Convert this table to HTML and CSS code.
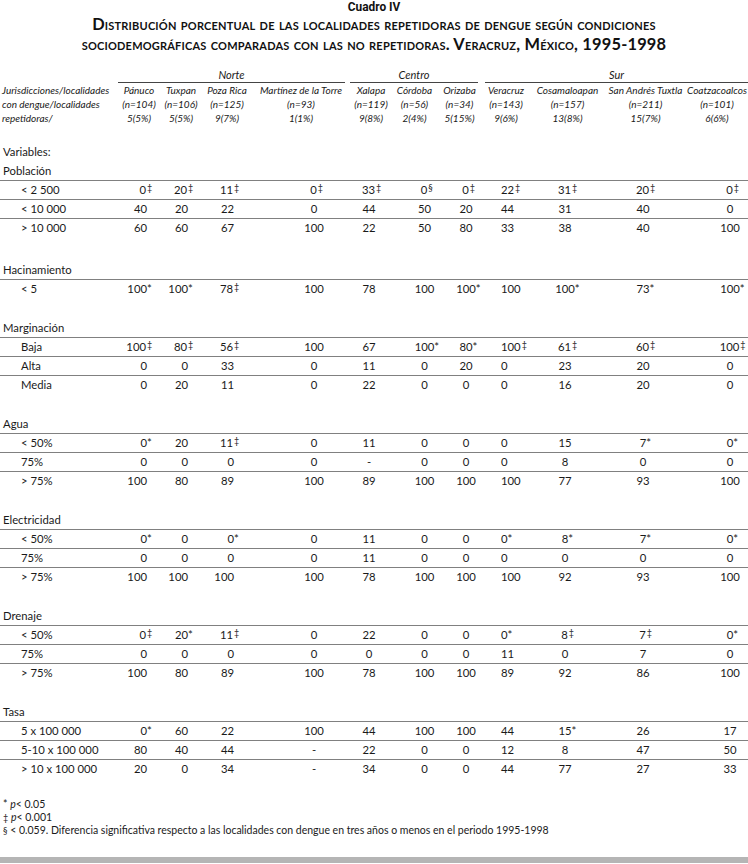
FILE: index.html
```html
<!DOCTYPE html>
<html lang="es">
<head>
<meta charset="utf-8">
<title>Cuadro IV</title>
<link rel="stylesheet" href="styles.css">
</head>
<body>
<div class="page">
  <div class="cuadro">Cuadro IV</div>
  <h1 class="title">Distribución porcentual de las localidades repetidoras de dengue según condiciones<br>sociodemográficas comparadas con las no repetidoras. Veracruz, México, 1995-1998</h1>

  <div class="groups">
    <div class="g norte">Norte</div>
    <div class="g centro">Centro</div>
    <div class="g sur">Sur</div>
  </div>
  <div class="heads">
    <div class="hlabel">Jurisdicciones/localidades<br>con dengue/localidades<br>repetidoras/</div>
    <div>Pánuco<br>(n=104)<br>5(5%)</div>
    <div>Tuxpan<br>(n=106)<br>5(5%)</div>
    <div>Poza Rica<br>(n=125)<br>9(7%)</div>
    <div>Martínez de la Torre<br>(n=93)<br>1(1%)</div>
    <div>Xalapa<br>(n=119)<br>9(8%)</div>
    <div>Córdoba<br>(n=56)<br>2(4%)</div>
    <div>Orizaba<br>(n=34)<br>5(15%)</div>
    <div>Veracruz<br>(n=143)<br>9(6%)</div>
    <div>Cosamaloapan<br>(n=157)<br>13(8%)</div>
    <div>San Andrés Tuxtla<br>(n=211)<br>15(7%)</div>
    <div>Coatzacoalcos<br>(n=101)<br>6(6%)</div>
  </div>

  <div class="variables">Variables:</div>

  <section class="sec first">
    <div class="stitle">Población</div>
    <div class="row"><div>&lt; 2 500</div><div>0<span class="m">‡</span></div><div>20<span class="m">‡</span></div><div>11<span class="m">‡</span></div><div>0<span class="m">‡</span></div><div>33<span class="m">‡</span></div><div>0<span class="m">§</span></div><div>0<span class="m">‡</span></div><div>22<span class="m">‡</span></div><div>31<span class="m">‡</span></div><div>20<span class="m">‡</span></div><div>0<span class="m">‡</span></div></div>
    <div class="row"><div>&lt; 10 000</div><div>40</div><div>20</div><div>22</div><div>0</div><div>44</div><div>50</div><div>20</div><div>44</div><div>31</div><div>40</div><div>0</div></div>
    <div class="row"><div>&gt; 10 000</div><div>60</div><div>60</div><div>67</div><div>100</div><div>22</div><div>50</div><div>80</div><div>33</div><div>38</div><div>40</div><div>100</div></div>
  </section>

  <section class="sec">
    <div class="stitle">Hacinamiento</div>
    <div class="row"><div>&lt; 5</div><div>100<span class="a">*</span></div><div>100<span class="a">*</span></div><div>78<span class="m">‡</span></div><div>100</div><div>78</div><div>100</div><div>100<span class="a">*</span></div><div>100</div><div>100<span class="a">*</span></div><div>73<span class="a">*</span></div><div>100<span class="a">*</span></div></div>
  </section>

  <section class="sec">
    <div class="stitle">Marginación</div>
    <div class="row"><div>Baja</div><div>100<span class="m">‡</span></div><div>80<span class="m">‡</span></div><div>56<span class="m">‡</span></div><div>100</div><div>67</div><div>100<span class="a">*</span></div><div>80<span class="a">*</span></div><div>100<span class="m">‡</span></div><div>61<span class="m">‡</span></div><div>60<span class="m">‡</span></div><div>100<span class="m">‡</span></div></div>
    <div class="row"><div>Alta</div><div>0</div><div>0</div><div>33</div><div>0</div><div>11</div><div>0</div><div>20</div><div>0</div><div>23</div><div>20</div><div>0</div></div>
    <div class="row"><div>Media</div><div>0</div><div>20</div><div>11</div><div>0</div><div>22</div><div>0</div><div>0</div><div>0</div><div>16</div><div>20</div><div>0</div></div>
  </section>

  <section class="sec">
    <div class="stitle">Agua</div>
    <div class="row"><div>&lt; 50%</div><div>0<span class="a">*</span></div><div>20</div><div>11<span class="m">‡</span></div><div>0</div><div>11</div><div>0</div><div>0</div><div>0</div><div>15</div><div>7<span class="a">*</span></div><div>0<span class="a">*</span></div></div>
    <div class="row"><div>75%</div><div>0</div><div>0</div><div>0</div><div>0</div><div>-</div><div>0</div><div>0</div><div>0</div><div>8</div><div>0</div><div>0</div></div>
    <div class="row"><div>&gt; 75%</div><div>100</div><div>80</div><div>89</div><div>100</div><div>89</div><div>100</div><div>100</div><div>100</div><div>77</div><div>93</div><div>100</div></div>
  </section>

  <section class="sec">
    <div class="stitle">Electricidad</div>
    <div class="row"><div>&lt; 50%</div><div>0<span class="a">*</span></div><div>0</div><div>0<span class="a">*</span></div><div>0</div><div>11</div><div>0</div><div>0</div><div>0<span class="a">*</span></div><div>8<span class="a">*</span></div><div>7<span class="a">*</span></div><div>0<span class="a">*</span></div></div>
    <div class="row"><div>75%</div><div>0</div><div>0</div><div>0</div><div>0</div><div>11</div><div>0</div><div>0</div><div>0</div><div>0</div><div>0</div><div>0</div></div>
    <div class="row"><div>&gt; 75%</div><div>100</div><div>100</div><div>100</div><div>100</div><div>78</div><div>100</div><div>100</div><div>100</div><div>92</div><div>93</div><div>100</div></div>
  </section>

  <section class="sec">
    <div class="stitle">Drenaje</div>
    <div class="row"><div>&lt; 50%</div><div>0<span class="m">‡</span></div><div>20<span class="a">*</span></div><div>11<span class="m">‡</span></div><div>0</div><div>22</div><div>0</div><div>0</div><div>0<span class="a">*</span></div><div>8<span class="m">‡</span></div><div>7<span class="m">‡</span></div><div>0<span class="a">*</span></div></div>
    <div class="row"><div>75%</div><div>0</div><div>0</div><div>0</div><div>0</div><div>0</div><div>0</div><div>0</div><div>11</div><div>0</div><div>7</div><div>0</div></div>
    <div class="row"><div>&gt; 75%</div><div>100</div><div>80</div><div>89</div><div>100</div><div>78</div><div>100</div><div>100</div><div>89</div><div>92</div><div>86</div><div>100</div></div>
  </section>

  <section class="sec">
    <div class="stitle">Tasa</div>
    <div class="row"><div>5 x 100 000</div><div>0<span class="a">*</span></div><div>60</div><div>22</div><div>100</div><div>44</div><div>100</div><div>100</div><div>44</div><div>15<span class="a">*</span></div><div>26</div><div>17</div></div>
    <div class="row"><div>5-10 x 100 000</div><div>80</div><div>40</div><div>44</div><div>-</div><div>22</div><div>0</div><div>0</div><div>12</div><div>8</div><div>47</div><div>50</div></div>
    <div class="row"><div>&gt; 10 x 100 000</div><div>20</div><div>0</div><div>34</div><div>-</div><div>34</div><div>0</div><div>0</div><div>44</div><div>77</div><div>27</div><div>33</div></div>
  </section>

  <div class="notes">
    <p><span class="na">*</span> <i>p</i>&lt; 0.05</p>
    <p><span class="nm">‡</span> <i>p</i>&lt; 0.001</p>
    <p><span class="nm">§</span> &lt; 0.059. Diferencia significativa respecto a las localidades con dengue en tres años o menos en el periodo 1995-1998</p>
  </div>

  <div class="bar"></div>
</div>
</body>
</html>
```

FILE: styles.css
```css
* { box-sizing: border-box; }

html, body {
  margin: 0;
  padding: 0;
  background: #ffffff;
}

body {
  font-family: "Lato", "Open Sans", sans-serif;
  color: #1a1a1a;
  font-size: 11.3px;
}

.page {
  width: 748px;
  height: 864px;
  overflow: hidden;
}

.cuadro {
  font-family: "Roboto", "Liberation Sans", sans-serif;
  font-weight: 700;
  font-size: 11.9px;
  line-height: 14px;
  height: 14px;
  text-align: center;
  color: #111;
}

.title {
  margin: 0;
  font-size: 16.4px;
  line-height: 19.7px;
  letter-spacing: 0.2px;
  font-weight: 700;
  font-variant: small-caps;
  text-align: center;
  color: #111;
  white-space: nowrap;
}

/* column template shared by header and rows */
.groups,
.heads,
.row {
  display: grid;
  grid-template-columns: 118px 42px 42px 50px 98px 42px 45px 45px 48px 75px 81px 62px;
}

.groups {
  margin-top: 14.6px;
  height: 15px;
  font-style: italic;
  font-size: 11px;
}

.g {
  height: 15px;
  line-height: 14px;
  text-align: center;
  border-bottom: 1px solid #444;
}

.norte { grid-column: 2 / 6; margin-right: 5px; }
.centro { grid-column: 6 / 9; margin-right: 4px; }
.sur { grid-column: 9 / 13; margin-left: 3px; }

.heads {
  font-style: italic;
  font-size: 10px;
  line-height: 14px;
}

.heads > div {
  text-align: center;
  white-space: nowrap;
}

.heads > .hlabel {
  text-align: left;
  padding-left: 2px;
}

.variables {
  margin-top: 17px;
  height: 19px;
  line-height: 19px;
  padding-left: 3px;
}

.sec {
  margin-bottom: 20px;
}

.sec.first {
  margin-bottom: 23px;
}

.stitle {
  height: 19px;
  line-height: 19px;
  padding-left: 3px;
}

.row {
  height: 19px;
  line-height: 18px;
  border-top: 1px solid #808080;
  white-space: nowrap;
}

.row > div:nth-child(1) { padding-left: 21px; }
.row > div:nth-child(2) { text-align: right; padding-right: 13px; }
.row > div:nth-child(3) { text-align: right; padding-right: 14px; }
.row > div:nth-child(4) { text-align: right; padding-right: 18px; }
.row > div:nth-child(5) { text-align: center; padding-left: 26px; }
.row > div:nth-child(6) { text-align: center; padding-right: 4px; }
.row > div:nth-child(7) { text-align: center; padding-left: 20px; }
.row > div:nth-child(8) { text-align: center; padding-left: 13px; }
.row > div:nth-child(9) { text-align: left; padding-left: 19px; }
.row > div:nth-child(10) { text-align: center; padding-right: 5px; }
.row > div:nth-child(11) { text-align: center; padding-right: 5px; }
.row > div:nth-child(12) { text-align: center; padding-left: 26px; }

/* hanging significance markers */
.m,
.a {
  display: inline-block;
  width: 0;
  overflow: visible;
  white-space: nowrap;
}

.m {
  font-size: 9px;
  vertical-align: top;
  line-height: 14px;
  padding-left: 1px;
}

.a {
  font-size: 11.3px;
}

.notes {
  margin-top: 18px;
  font-size: 10.5px;
  line-height: 13px;
  padding-left: 3px;
}

.notes p {
  margin: 0;
}

.na {
  font-size: 10.5px;
}

.nm {
  font-size: 9px;
  vertical-align: top;
}

.bar {
  margin-top: 20px;
  height: 6px;
  background: #b5b5b5;
}
```
